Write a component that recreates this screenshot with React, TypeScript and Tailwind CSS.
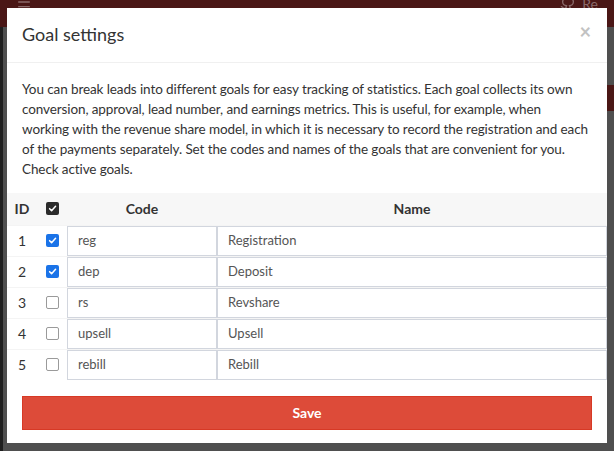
import { Menu, Github } from "lucide-react";

type Goal = { id: number; active: boolean; code: string; name: string };

const goals: Goal[] = [
  { id: 1, active: true, code: "reg", name: "Registration" },
  { id: 2, active: true, code: "dep", name: "Deposit" },
  { id: 3, active: false, code: "rs", name: "Revshare" },
  { id: 4, active: false, code: "upsell", name: "Upsell" },
  { id: 5, active: false, code: "rebill", name: "Rebill" },
];

const Check = ({ on, dark }: { on: boolean; dark?: boolean }) => {
  if (!on) {
    return <span className="block w-[13px] h-[13px] rounded-[2px] border border-[#9a9a9a] bg-white" />;
  }
  return (
    <span
      className={`flex items-center justify-center w-[13px] h-[13px] rounded-[2px] ${
        dark ? "bg-[#2b2b2b]" : "bg-[#1a73e8]"
      }`}
    >
      <svg width="9" height="9" viewBox="0 0 10 10" fill="none">
        <path d="M1.8 5.2 4 7.4 8.4 2.6" stroke="white" strokeWidth="1.7" strokeLinecap="round" strokeLinejoin="round" />
      </svg>
    </span>
  );
};

const GoalRow = ({ goal }: { goal: Goal }) => (
  <tr className="border-t border-[#f4f4f4]">
    <td className="w-[30px] text-center text-[14px] text-[#333]">{goal.id}</td>
    <td className="w-[30px]">
      <div className="flex justify-center">
        <Check on={goal.active} />
      </div>
    </td>
    <td className="w-[150px] p-0">
      <div className="h-[30px] border border-[#d2d6de] flex items-center pl-[10px] text-[13px] text-[#555]">
        {goal.code}
      </div>
    </td>
    <td className="p-0">
      <div className="h-[30px] border border-[#d2d6de] flex items-center pl-[10px] text-[13px] text-[#555]">
        {goal.name}
      </div>
    </td>
  </tr>
);

export default function App() {
  return (
    <div className="relative w-[614px] h-[451px] overflow-hidden bg-[#4f4f4f]" style={{ fontFamily: "Lato, 'Noto Sans', sans-serif" }}>
      {/* dimmed page behind */}
      <div className="h-[27px] bg-[#4a1716] flex items-start justify-between px-[16px]">
        <Menu size={16} className="text-[#8a6a6a] -mt-[6px]" />
        <div className="flex items-center gap-[6px] -mt-[4px] text-[#8a6a6a] text-[14px] leading-[16px]">
          <Github size={16} />
          <span>Re</span>
        </div>
      </div>
      <div className="flex">
        <div className="w-[3px] h-[424px] bg-[#1f1f1f]" />
        <div className="flex-1" />
        <div className="w-[8px] pt-[58px]">
          <div className="h-[26px] bg-[#4a1716]" />
        </div>
      </div>

      {/* modal */}
      <div className="absolute left-[7px] top-[8px] w-[600px] bg-white text-[#333]">
        <div className="h-[55px] px-[15px] flex items-center justify-between border-b border-[#f0f0f0]">
          <h4 className="text-[18px] text-[#333] -mt-[2px]">Goal settings</h4>
          <span className="text-[20px] font-bold text-[#c2c2c2] leading-none -mt-[9px] mr-[1px]">×</span>
        </div>
        <div className="pt-[16px]">
          <p className="px-[15px] text-[13.5px] leading-[20px] text-[#333] tracking-[-0.1px]">
            You can break leads into different goals for easy tracking of statistics. Each goal collects its own
            <br />
            conversion, approval, lead number, and earnings metrics. This is useful, for example, when
            <br />
            working with the revenue share model, in which it is necessary to record the registration and each
            <br />
            of the payments separately. Set the codes and names of the goals that are convenient for you.
            <br />
            Check active goals.
          </p>
          <table className="w-full mt-[14px] border-collapse">
            <thead>
              <tr className="bg-[#f7f7f7] h-[32px]">
                <th className="w-[30px] text-[14px] font-bold text-[#333]">ID</th>
                <th className="w-[30px]">
                  <div className="flex justify-center">
                    <Check on dark />
                  </div>
                </th>
                <th className="w-[150px] text-[14px] font-bold text-[#333]">Code</th>
                <th className="text-[14px] font-bold text-[#333]">Name</th>
              </tr>
            </thead>
            <tbody>
              {goals.map((g) => (
                <GoalRow key={g.id} goal={g} />
              ))}
            </tbody>
          </table>
        </div>
        <div className="px-[15px] pt-[16px] pb-[13px]">
          <button className="w-full h-[34px] bg-[#dd4b39] border border-[#d73925] text-white text-[14px] font-bold">
            Save
          </button>
        </div>
      </div>
    </div>
  );
}
